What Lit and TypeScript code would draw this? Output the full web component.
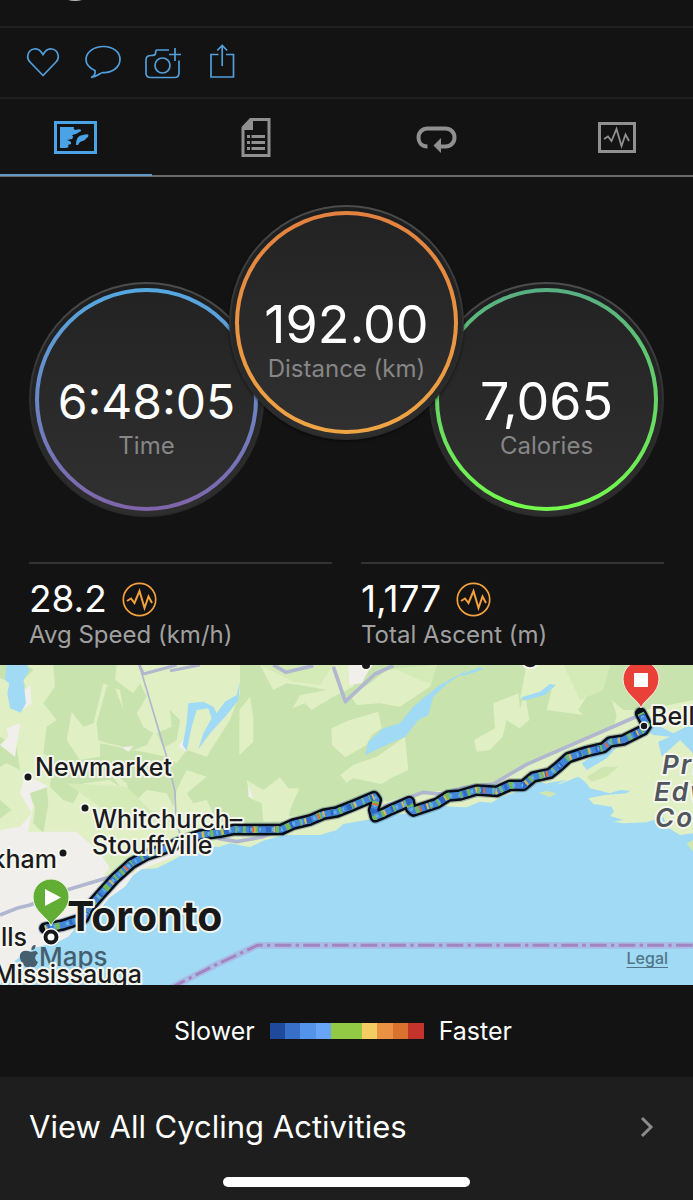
import { LitElement, html, css, svg } from "lit";
import { customElement, property } from "lit/decorators.js";

const pulse = "M2 11 L6 8.500 L9.500 13 L14.500 1 L19.500 18 L23.500 6.500 L27 13";

@customElement("metric-dial")
class MetricDial extends LitElement {
  @property() value = "";
  @property() label = "";
  @property() from = "";
  @property() to = "";

  static styles = css`
    :host { display: block; flex: none; width: 235px; height: 235px; }
    .rim {
      box-sizing: border-box; height: 100%; padding: 4px; border-radius: 50%;
      border: 2px solid transparent;
      background: linear-gradient(#1d1e1f, #2e2e2e) padding-box,
        linear-gradient(#4c4c4c, #2b2b2b 60%) border-box;
    }
    .ring { box-sizing: border-box; height: 100%; padding: 4px; border-radius: 50%; }
    .face {
      box-sizing: border-box; height: 100%; padding-top: 82px; border-radius: 50%;
      background: linear-gradient(#232323, #303030);
      display: flex; flex-direction: column; align-items: center; white-space: nowrap;
    }
    .value { font-size: 52px; line-height: 56px; color: #fff; }
    .value.long { font-size: 48px; }
    .label { font-size: 24px; line-height: 32px; color: #868686; }
  `;

  render() {
    return html`<div class="rim">
      <div class="ring" style="background:linear-gradient(${this.from}, ${this.to})">
        <div class="face">
          <span class="value ${this.value.length > 6 ? "long" : ""}">${this.value}</span>
          <span class="label">${this.label}</span>
        </div>
      </div>
    </div>`;
  }
}

@customElement("stat-cell")
class StatCell extends LitElement {
  @property() value = "";
  @property() label = "";

  static styles = css`
    :host { display: block; border-top: 2px solid #333; padding-top: 13px; }
    .line { display: flex; align-items: center; gap: 15px; }
    .value { font-size: 37px; line-height: 44px; color: #fff; }
    .label { font-size: 24px; line-height: 28px; color: #a0a0a0; }
    .chart { display: flex; padding: 0; border: 0; background: none; }
  `;

  render() {
    return html`<div class="line">
        <span class="value">${this.value}</span>
        <button class="chart" aria-label="Show chart">
          <svg width="35" height="35" viewBox="0 0 35 35" fill="none" stroke="#f2a13c">
            <circle cx="17.500" cy="17.500" r="16.200" stroke-width="1.700" />
            <path d=${pulse} transform="translate(3 8)" stroke-width="2" />
          </svg>
        </button>
      </div>
      <div class="label">${this.label}</div>`;
  }
}

const route =
  "M135 805 L185 796 L250 775 L265 745 L300 705 L345 655 L395 610 L440 585 L480 572 L540 547 L600 525 L660 517 L705 508 L735 509 L845 508 L880 492 L930 480 L970 463 L1010 456 L1060 436 L1122 410 L1129 420 L1121 450 L1126 470 L1150 460 L1175 448 L1228 425 L1232 445 L1240 453 L1310 430 L1345 408 L1380 405 L1430 390 L1490 394 L1530 376 L1570 376 L1600 351 L1650 340 L1675 320 L1705 293 L1760 275 L1810 263 L1830 246 L1870 240 L1930 210 L1940 195 L1922 160";

const terrain = svg`
  <rect y="15" width="2079" height="960" fill="#e0efc4" />
  <g fill="#c8e3ae">
    <path d="M160 15 H350 L345 60 L400 100 L420 70 L440 110 L410 160 L430 200 L460 220 L440 255 L400 270 L350 255 L320 250 L295 240 L290 190 L320 80 L340 70 L370 150 L360 90 L310 70 L280 190 L250 200 L215 155 L200 240 L240 300 L300 290 L330 340 L360 380 L330 360 L250 370 L220 430 L190 420 L150 380 L160 300 L130 280 L140 200 L170 180 L130 130 L165 80 Z" />
    <path d="M510 150 L540 180 L530 240 L490 265 L470 220 L515 200 Z M300 250 L500 290 L530 310 L560 270 L620 290 L690 180 L720 100 L720 15 L2079 15 L2079 140 L1940 160 L1830 205 L1600 310 L1480 370 L1380 390 L1270 395 L1160 425 L1130 400 L1060 425 L880 480 L845 495 L720 500 L650 480 L620 420 L580 430 L560 400 L620 350 L560 330 L530 390 L520 440 L500 400 L440 390 L400 430 L380 370 L300 310 Z" />
    <path d="M0 15 H80 L100 30 L70 60 L80 90 L50 50 L15 60 L0 55 Z M0 230 L50 260 L60 330 L20 310 L0 320 Z M80 390 L140 380 L145 430 L130 520 L100 490 L105 440 Z M0 420 L35 450 L0 475 Z" />
  </g>
  <g fill="#e0efc4">
    <path d="M994 205 L1050 180 L1135 155 L1145 205 L1115 225 L1100 255 L1035 292 L996 255 Z M1020 345 L1060 315 L1130 290 L1215 230 L1225 330 L1180 350 L1145 372 L1060 355 L1040 368 Z" />
    <path d="M740 360 L790 390 L840 352 L865 385 L898 385 L870 450 L865 482 L790 485 L785 430 L750 415 Z M718 150 L750 110 L760 170 L760 245 L718 285 Z" />
    <path d="M780 15 H1080 L1060 80 L1000 110 L935 150 L915 130 L878 145 L900 105 L980 90 L930 80 L860 70 L820 90 Z M1110 70 L1160 30 L1310 15 L1290 80 L1200 140 L1140 130 L1070 135 L1050 105 Z" />
    <path d="M1480 130 L1555 100 L1560 145 L1575 100 L1588 180 L1558 205 L1520 180 L1508 230 L1470 270 L1430 275 L1422 240 L1485 205 Z" />
    <path d="M1580 15 L1690 15 L1790 60 L1735 150 L1750 165 L1640 150 L1655 90 L1560 115 Z M1835 120 L1870 150 L1935 150 L2079 120 V300 L1950 300 L1890 220 L1840 205 L1850 165 Z" />
  </g>
  <g fill="#d4ebb8">
    <path d="M200 370 L380 380 L450 450 L560 490 L500 500 L300 440 Z M780 15 H1000 L960 75 L880 65 Z M1180 25 L1310 15 L1290 70 L1260 60 Z M1690 15 H1830 L1810 90 L1740 120 Z" />
  </g>
  <g fill="#f0efeb">
    <path d="M0 530 L80 515 L150 515 L230 515 L300 580 L330 620 L310 650 L400 640 L440 590 L540 540 L600 530 L570 570 L420 630 L240 830 L120 870 L0 975 Z" />
    <path d="M20 205 L60 190 L45 290 L0 255 L25 230 Z M75 340 L145 380 L90 400 L100 440 L80 530 L0 530 L0 510 L60 500 L95 460 L60 400 Z M65 100 L90 75 L95 130 L60 155 Z M1045 15 H1115 L1085 70 L1048 75 Z M365 262 L400 258 L385 275 Z M535 260 L555 230 L560 275 Z M745 375 L760 415 L745 410 Z" />
  </g>
  <path fill="#d8edbd" d="M305 585 L440 590 L400 630 L340 640 Z" />
  <path fill="#e0efc4" d="M600 535 L845 520 L850 470 L1130 450 L1380 410 L1580 370 L1720 300 L1760 290 L1780 330 L1640 380 L1400 450 L1000 520 L780 545 L750 562 L680 560 Z" />
  <path fill="#a0daf4" d="M0 960 L30 915 L60 890 L110 862 L165 850 L205 830 L230 800 L300 748 L330 712 L375 680 L400 645 L425 628 L470 625 L520 600 L570 570 L620 562 L660 560 L690 550 L750 562 L790 542 L850 525 L960 525 L1010 510 L1030 492 L1100 480 L1150 465 L1240 460 L1310 435 L1355 440 L1400 442 L1440 425 L1475 428 L1500 412 L1560 392 L1620 365 L1650 375 L1680 372 L1735 350 L1755 365 L1770 385 L1830 400 L1860 390 L1890 392 L1880 400 L1815 405 L1765 415 L1780 432 L1835 440 L1842 455 L1830 468 L1870 480 L1840 485 L1870 490 L1940 487 L1990 470 L2000 500 L2040 525 L2079 520 V975 H0 Z" />
  <g fill="#a0daf4">
    <path d="M20 15 H80 L88 30 L70 60 L78 130 L62 158 L30 145 L22 100 L28 70 L15 60 Z" />
    <path d="M565 130 L610 125 L640 140 L650 160 L675 125 L710 105 L720 65 L715 120 L680 165 L630 220 L595 268 L610 220 L635 175 L625 145 L590 150 L575 200 L560 272 L548 255 L560 190 Z" />
    <path d="M1095 285 L1105 245 L1150 205 L1200 190 L1240 140 L1275 110 L1320 75 L1410 25 L1340 72 L1300 110 L1285 165 L1255 180 L1215 230 L1160 255 Z" />
    <path d="M1565 112 L1620 95 L1650 72 L1668 75 L1635 105 L1570 122 Z M1380 45 L1440 22 L1450 28 L1390 48 Z" />
    <path d="M1745 310 L1790 280 L1850 262 L1820 295 L1760 330 Z M1935 210 L1960 190 L2020 220 L2079 190 V280 L2040 240 L1985 290 L1975 245 L2010 230 L1960 225 Z" />
    <path d="M1640 370 L1665 365 L1700 360 L1650 382 Z" />
  </g>
  <path fill="#d0e6b0" d="M1760 350 L1810 320 L1855 320 L1820 350 L1775 365 Z M1615 398 L1640 393 L1670 400 L1650 412 Z M2060 550 L2079 540 V575 Z" />
  <g fill="none" stroke="#b0b7cf" stroke-linejoin="round">
    <path d="M418 15 L500 290 L525 395 L528 480 L545 540" stroke-width="5" />
    <path d="M418 15 L430 42 L530 15 M510 32 L600 15" stroke-width="9" />
    <path d="M820 15 L858 37 L940 17 M1000 20 L1036 125 L1125 42 L1180 17" stroke-width="11" />
    <path d="M0 765 L50 745 L90 735 L200 690 L350 645 M655 535 L710 545 L790 530 L850 505 M1150 440 L1270 397 L1320 402 L1390 383 L1480 372 L1580 313 L1920 165" stroke-width="11" />
  </g>
  <g fill="none">
    <path d="M510 985 L640 918 L772 856 H2079" stroke="#a9bce4" stroke-width="20" />
    <path d="M510 985 L640 918 L772 856 H2079" stroke="#a184c2" stroke-width="9" stroke-dasharray="50 13 10 13" />
  </g>
  <g fill="none" stroke-linejoin="round">
    <path d=${route} stroke="#35506a" stroke-opacity=".35" stroke-width="42" stroke-linecap="round" />
    <path d=${route} stroke="#080d18" stroke-width="35" stroke-linecap="round" />
    <path d=${route} stroke="#4486d8" stroke-width="20" />
    <path d=${route} stroke="#74bb58" stroke-width="20" stroke-dasharray="9 22 14 31 6 17" />
    <path d=${route} stroke="#2f68c4" stroke-width="20" stroke-dasharray="15 61 8 43" />
    <path d=${route} stroke="#65afe8" stroke-width="11" stroke-dasharray="8 19 5 33" />
    <path d=${route} stroke="#dfb952" stroke-width="17" stroke-dasharray="5 92 6 54" />
    <path d=${route} stroke="#e1683b" stroke-width="17" stroke-dasharray="0 112 6 85" />
  </g>
`;

const pin = "M0 46 C-3 37 -18 32 -18 17 A18 18 0 0 1 18 17 C18 32 3 37 0 46 Z";

@customElement("route-map")
class RouteMap extends LitElement {
  static styles = css`
    :host { display: block; position: relative; }
    .canvas { display: block; width: 100%; height: auto; }
    .town { font-size: 25px; font-weight: 500; fill: #1b1b1d; }
    .city { font-size: 41px; font-weight: 700; fill: #17181a; }
    .county { font-size: 26px; font-weight: 600; font-style: italic; fill: #50565b; letter-spacing: 2px; }
    .brand { font-size: 26px; font-weight: 500; fill: #455f6f; }
    .halo { paint-order: stroke; stroke: #f5f6ee; stroke-width: 4px; stroke-linejoin: round; }
    .legal { position: absolute; right: 25px; bottom: 17px; font-size: 16px; line-height: 20px;
      font-weight: 500; color: #527487; text-underline-offset: 3px; }
  `;

  render() {
    return html`<svg class="canvas" viewBox="0 0 693 320" role="img" aria-label="Route from Toronto to Belleville">
        <g transform="scale(.33333) translate(0 -15)">${terrain}</g>
        <g class="halo" fill="#17181a">
          <circle cx="28" cy="112" r="3.500" /><circle cx="85" cy="143" r="3.500" />
          <circle cx="63" cy="188" r="3.500" /><circle cx="366" cy="0" r="4" />
        </g>
        <g class="brand">
          <path transform="translate(19 280)" d="M12.500 5 C12 2 14 0 16.500 0 C17 3 15 5 12.500 5 Z M12 7 C14 7 17 4 19 8.500 C14.500 11 16 15.500 19 17 C17 22 15 23 11.500 21.500 C8 23 6 22.500 3 18 C-2 10 2 3 12 7 Z" />
          <text x="39" y="301">Maps</text>
        </g>
        <g class="town halo">
          <text x="35" y="111">Newmarket</text>
          <text x="92" y="163">Whitchurch–</text>
          <text x="92" y="189">Stouffville</text>
          <text x="57" y="203" text-anchor="end">kham</text>
          <text x="27" y="281" text-anchor="end">lls</text>
          <text x="142" y="318" text-anchor="end">Mississauga</text>
          <text x="651" y="60">Belleville</text>
          <text x="538" y="-3" text-anchor="end">g</text>
        </g>
        <g class="county halo">
          <text x="662" y="109">Prince</text>
          <text x="654" y="136">Edward</text>
          <text x="655" y="162">County</text>
        </g>
        <text class="city halo" x="67" y="266">Toronto</text>
        <circle cx="51" cy="272" r="6" fill="#fff" stroke="#fff" stroke-width="6" />
        <circle cx="51" cy="272" r="5.500" fill="#fff" stroke="#17181a" stroke-width="4" />
        <circle cx="644" cy="61" r="4" fill="#17181a" stroke="#fff" stroke-width="1.500" />
        <g transform="translate(51 215)">
          <path d=${pin} fill="#62ae34" stroke="#eff5e8" stroke-width="1" />
          <path d="M-6 9 L10 17.500 L-6 26 Z" fill="#fff" />
        </g>
        <g transform="translate(641 -3)">
          <path d=${pin} fill="#e94138" stroke="#f7eee8" stroke-width="1" />
          <path d="M-7 11 H7 V25 H-7 Z" fill="#fff" />
        </g>
      </svg>
      <a class="legal" href="#legal">Legal</a>`;
  }
}

const actions = [
  { name: "Like", art: svg`<path d="M20 33.500 L7 20 C3 16 4.500 8 11 7 C15.500 6 18 9 20 12.500 C22 9 24.500 6 29 7 C35.500 8 37 16 33 20 Z" />` },
  { name: "Comment", art: svg`<path d="M8 35.500 C11.500 34 12.500 31 12 28.500 C6.500 26 3 22 3 17.500 C3 10.500 10.500 4.500 20.500 4.500 C30 4.500 37 10 37 17.500 C37 25 29.500 31 20 30.500 C17 30.500 15.500 34.500 8 35.500 Z" />` },
  { name: "Add photo", art: svg`<path d="M26 8 H14 Q12.500 8 12.500 11.500 Q12.500 13.500 8 13.500 Q3 13.500 3 18 V31 Q3 35.500 7.500 35.500 H31.500 Q36 35.500 36 31 V18.500 M32 6 V19 M26 12.500 H38" /><circle cx="19.500" cy="23.500" r="7.500" />` },
  { name: "Share", art: svg`<path d="M15.500 12.500 H8 V35 H30.500 V12.500 H23 M19.200 24 V4 M14.200 8.500 L19.200 3.500 L24.200 8.500" />` },
];

const tabs = [
  {
    name: "Overview",
    art: svg`<rect x="3.500" y="5.500" width="40" height="30" fill="none" stroke="currentColor" stroke-width="3" />
      <path transform="translate(-1 0)" d="M9 10 H23 Q22 12 24 13 Q31 11 30 14 L25 17 L21 18 Q23 20 21 22 L16 23 Q21 24 20 27 L17 28 Q19 31 14 31 H9 Z M25 28 Q25 18 32 18 Q39 16 37 20 Q35 21 34 23 L29 25 L27 28 Z" />`,
  },
  {
    name: "Stats",
    art: svg`<path fill-rule="evenodd" d="M18 1 H38.500 V40 H9.500 V10 Z M12.500 13 V37 H35.500 V4 H21 V13 Z" />
      <path d="M15 18 H18 V21 H15 Z M19.500 18 H33 V21 H19.500 Z M15 24 H18 V27 H15 Z M19.500 24 H33 V27 H19.500 Z M15 30 H18 V33 H15 Z M19.500 30 H33 V33 H19.500 Z" />`,
  },
  {
    name: "Laps",
    art: svg`<path d="M15.500 29.500 C8.500 29.500 6.500 24 6.500 20.500 C6.500 15 10.500 11.500 15.500 11.500 H33.500 C38.500 11.500 42.500 15 42.500 20.500 C42.500 26 38.500 29.500 33.500 29.500 H28" fill="none" stroke="currentColor" stroke-width="4" />
      <path d="M21.500 28.500 L29 21 V36 Z" />`,
  },
  {
    name: "Charts",
    art: svg`<path d="M7.500 6.500 H42.500 V34.500 H7.500 Z" fill="none" stroke="currentColor" stroke-width="3" />
      <path d=${pulse} transform="translate(10 11)" fill="none" stroke="currentColor" stroke-width="1.800" />`,
  },
];

const scale = ["#1f4a9c", "#3870c9", "#5393e9", "#69a5f6", "#92c945", "#92c945", "#f3cc62", "#ea9143", "#da722f", "#c5342c"];

@customElement("app-root")
class AppRoot extends LitElement {
  static styles = css`
    :host {
      display: flex; flex-direction: column; min-height: 100vh; overflow: hidden;
      background: #131313; color: #fff; font-family: Inter, "Liberation Sans", sans-serif;
    }
    button { padding: 0; border: 0; background: none; font: inherit; color: inherit; }
    .profile { display: block; height: 26px; overflow: hidden; border-bottom: 2px solid #202020; }
    .avatar { display: block; margin: -49px 0 0 50px; width: 50px; height: 50px; border-radius: 50%; background: #b9bcb6; }
    .actions { display: flex; padding: 14px 13px 15px; border-bottom: 2px solid #202020; color: #529fdb; }
    .action { display: flex; justify-content: center; width: 60px; }
    .action svg { fill: none; stroke: currentColor; stroke-width: 1.700; }
    .tabs { display: flex; justify-content: space-between; padding: 0 16px; border-bottom: 2px solid #686868; }
    .tab { position: relative; display: flex; justify-content: center; align-items: center; width: 120px; height: 76px; color: #909090; }
    .tab svg { fill: currentColor; }
    .tab.active { color: #4ba3e7; }
    .tab.active::after { content: ""; position: absolute; inset: auto -16px -1px; height: 2px; background: #6498c5; }
    .dials { display: flex; justify-content: center; align-items: flex-end; padding: 28px 29px 45px; }
    .center { position: relative; margin: 0 -35px 77px; border-radius: 50%; box-shadow: 0 1px 3px #0009; }
    .stats { display: grid; grid-template-columns: 1fr 1fr; gap: 29px; padding: 0 29px 16px; }
    .legend { display: flex; justify-content: center; align-items: center; gap: 15px; height: 92px; padding-right: 7px; font-size: 25px; line-height: 32px; }
    .scale { display: grid; grid-template-columns: repeat(10, 1fr); width: 154px; height: 16px; }
    .footer { flex: 1; display: flex; flex-direction: column; align-items: center; background: #1e1e1e; }
    .more { align-self: stretch; display: flex; align-items: center; justify-content: space-between; padding: 0 38px 0 29px;
      height: 100px; font-size: 31px; line-height: 40px; color: #fff; text-decoration: none; }
    .home { width: 247px; height: 10px; border-radius: 5px; background: #fff; }
  `;

  render() {
    return html`
      <header class="profile"><span class="avatar"></span></header>
      <div class="actions">
        ${actions.map((a) => html`<button class="action" aria-label=${a.name}>
          <svg width="40" height="40" viewBox="0 0 40 40">${a.art}</svg>
        </button>`)}
      </div>
      <nav class="tabs">
        ${tabs.map((t, i) => html`<button class="tab ${i === 0 ? "active" : ""}" aria-label=${t.name}>
          <svg width="49" height="41" viewBox="0 0 49 41">${t.art}</svg>
        </button>`)}
      </nav>
      <section class="dials">
        <metric-dial value="6:48:05" label="Time" from="#55a9e0" to="#8064ab"></metric-dial>
        <metric-dial class="center" value="192.00" label="Distance (km)" from="#e28140" to="#efa544"></metric-dial>
        <metric-dial value="7,065" label="Calories" from="#58ae83" to="#74fb4c"></metric-dial>
      </section>
      <section class="stats">
        <stat-cell value="28.2" label="Avg Speed (km/h)"></stat-cell>
        <stat-cell value="1,177" label="Total Ascent (m)"></stat-cell>
      </section>
      <route-map></route-map>
      <div class="legend">
        <span>Slower</span>
        <div class="scale">${scale.map((c) => html`<span style="background:${c}"></span>`)}</div>
        <span>Faster</span>
      </div>
      <footer class="footer">
        <a class="more" href="#activities">View All Cycling Activities
          <svg width="17" height="22" viewBox="0 0 17 22" fill="none" stroke="#8b8b8b" stroke-width="3"><path d="M4 2 L13 11 L4 20" /></svg>
        </a>
        <span class="home"></span>
      </footer>
    `;
  }
}
